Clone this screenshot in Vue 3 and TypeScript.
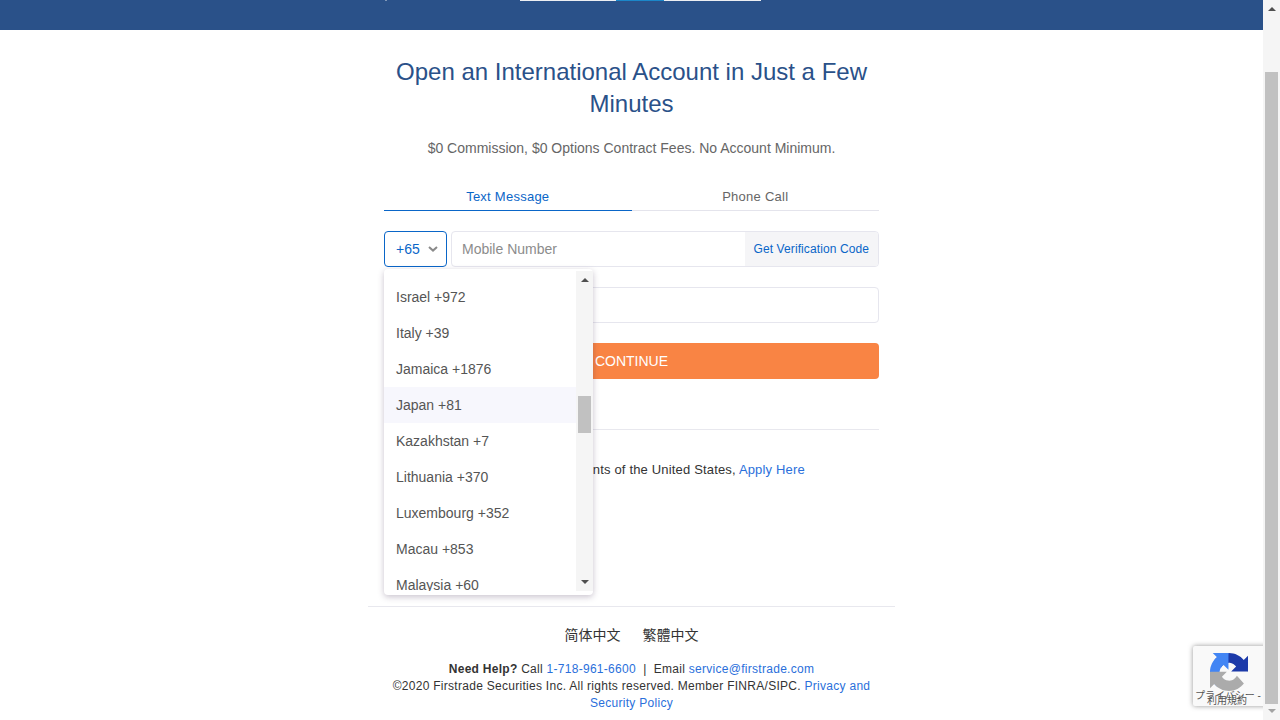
<script setup lang="ts">
const countries: string[] = [
  'Israel +972',
  'Italy +39',
  'Jamaica +1876',
  'Japan +81',
  'Kazakhstan +7',
  'Lithuania +370',
  'Luxembourg +352',
  'Macau +853',
  'Malaysia +60',
]
</script>

<template>
  <div class="page">
    <div class="main">
      <header class="topbar">
        <div class="topbar-line">
          <span class="seg tick"></span>
          <span class="seg white seg-a"></span>
          <span class="seg blue seg-b"></span>
          <span class="seg white seg-c"></span>
        </div>
      </header>

      <section class="content">
        <h1 class="title">Open an International Account in Just a Few Minutes</h1>
        <p class="sub">$0 Commission, $0 Options Contract Fees. No Account Minimum.</p>

        <div class="tabs">
          <div class="tab active">Text Message</div>
          <div class="tab">Phone Call</div>
        </div>

        <div class="phone-row">
          <div class="code-select">
            <span>+65</span>
            <svg class="chev" width="10" height="6" viewBox="0 0 10 6">
              <path d="M1 1l4 3.6L9 1" fill="none" stroke="#8a8a8a" stroke-width="2" />
            </svg>
          </div>
          <div class="phone-input">
            <span class="placeholder">Mobile Number</span>
            <span class="verify">Get Verification Code</span>
          </div>

          <div class="dropdown">
            <ul class="list">
              <li
                v-for="c in countries"
                :key="c"
                class="item"
                :class="{ hover: c === 'Japan +81' }"
              >{{ c }}</li>
            </ul>
            <div class="dd-scroll">
              <span class="tri up dark"></span>
              <span class="dd-thumb"></span>
              <span class="tri down dark"></span>
            </div>
          </div>
        </div>

        <div class="code-input"></div>
        <button class="continue" type="button">CONTINUE</button>
        <div class="rule"></div>
        <p class="note">For citizens and residents of the United States, <a class="link">Apply Here</a></p>
      </section>

      <footer class="footer">
        <div class="langs">
          <span>简体中文</span>
          <span>繁體中文</span>
        </div>
        <p class="legal">
          <b>Need Help?</b> Call <a class="link">1-718-961-6600</a> &nbsp;|&nbsp; Email <a class="link">service@firstrade.com</a><br />
          ©2020 Firstrade Securities Inc. All rights reserved. Member FINRA/SIPC. <a class="link">Privacy and Security Policy</a>
        </p>
      </footer>

      <div class="recaptcha">
        <svg class="rc-logo" width="38" height="38" viewBox="0 0 64 64">
          <path d="M64 31.955l-.033-1.37V4.687l-7.16 7.16C50.95 4.674 42.042.093 32.07.093 21.69.094 12.67 5.01 6.94 12.62l11.735 11.86a15.55 15.55 0 0 1 4.755-5.335c2.05-1.6 4.953-2.91 8.637-2.91.445 0 .79.052 1.043.15 4.565.36 8.522 2.88 10.852 6.54l-8.307 8.307c10.522-.04 22.41-.066 27.845.077" fill="#1c3aa9" />
          <path d="M31.855.002l-1.37.033H4.587l7.16 7.16C4.574 13.05-.007 21.958-.007 31.93c0 10.38 4.916 19.4 12.527 25.13l11.86-11.735a15.55 15.55 0 0 1-5.335-4.755c-1.6-2.05-2.91-4.953-2.91-8.637 0-.445.052-.79.15-1.043.36-4.565 2.88-8.522 6.54-10.852l8.307 8.307c-.04-10.522-.066-22.41.077-27.845" fill="#4285f4" />
          <path d="M.002 31.945l.033 1.37v25.898l7.16-7.16c5.855 7.173 14.763 11.754 24.735 11.754 10.38 0 19.4-4.916 25.13-12.527L45.325 38.42a15.55 15.55 0 0 1-4.755 5.335c-2.05 1.6-4.953 2.91-8.637 2.91-.445 0-.79-.052-1.043-.15-4.565-.36-8.522-2.88-10.852-6.54l8.307-8.307c-10.522.04-22.41.066-27.845-.077" fill="#ababab" />
        </svg>
        <span class="rc-line rc-one">プライバシー - </span>
        <span class="rc-line rc-two">利用規約</span>
      </div>
    </div>

    <aside class="scrollbar">
      <span class="tri up dark"></span>
      <span class="thumb"></span>
      <span class="tri down pale"></span>
    </aside>
  </div>
</template>

<style>
html, body {
  margin: 0;
  height: 100%;
  overflow: hidden;
  background: #fff;
}
</style>

<style scoped>
.page {
  display: flex;
  width: 1280px;
  height: 720px;
  overflow: hidden;
  font-family: "Liberation Sans", Arial, "Noto Sans CJK SC", sans-serif;
  color: #333;
}
.main {
  position: relative;
  flex: 1;
  min-width: 0;
  overflow: hidden;
}
.topbar {
  height: 30px;
  background: #2a5189;
}
.topbar-line {
  display: flex;
  padding-left: 385px;
}
.seg { height: 1px; }
.seg.tick { width: 2px; margin-right: 133px; background: #7f97b8; }
.seg.white { background: #eceef2; }
.seg.blue { background: #1b87c9; }
.seg-a { width: 96px; }
.seg-b { width: 48px; }
.seg-c { width: 97px; }

.content {
  box-sizing: border-box;
  width: 527px;
  height: 577px;
  margin: 0 auto;
  padding: 26px 16px 0;
  border-bottom: 1px solid #e8e8ee;
}
.title {
  margin: 0;
  font-size: 24px;
  line-height: 32px;
  font-weight: 400;
  text-align: center;
  color: #2a5189;
}
.sub {
  margin: 18px 0 0;
  font-size: 14px;
  line-height: 20px;
  text-align: center;
  color: #666;
}
.tabs {
  display: flex;
  margin-top: 26px;
  border-bottom: 1px solid #e4e4ec;
}
.tab {
  flex: 1;
  height: 26px;
  margin-bottom: -1px;
  font-size: 13px;
  line-height: 26px;
  letter-spacing: 0.25px;
  text-align: center;
  color: #666;
}
.tab.active {
  height: 26px;
  color: #0a66c8;
  border-bottom: 1px solid #0a66c8;
}
.phone-row {
  position: relative;
  display: flex;
  gap: 4px;
  margin-top: 20px;
  height: 36px;
}
.code-select {
  box-sizing: border-box;
  display: flex;
  align-items: center;
  justify-content: space-between;
  width: 63px;
  padding: 0 8px 0 11px;
  border: 1px solid #0a66c8;
  border-radius: 4px;
  font-size: 14px;
  color: #0a66c8;
}
.phone-input {
  box-sizing: border-box;
  display: flex;
  flex: 1;
  align-items: stretch;
  justify-content: space-between;
  border: 1px solid #e6e6ee;
  border-radius: 4px;
  overflow: hidden;
}
.placeholder {
  align-self: center;
  padding-left: 10px;
  font-size: 14px;
  color: #8c8c8c;
}
.verify {
  display: flex;
  align-items: center;
  padding: 0 9px 0 9px;
  background: #f5f5f7;
  font-size: 12px;
  letter-spacing: 0.1px;
  color: #0a66c8;
}
.dropdown {
  position: absolute;
  left: 0;
  top: 38px;
  z-index: 3;
  box-sizing: border-box;
  display: flex;
  width: 209px;
  height: 326px;
  padding: 2px 0 4px;
  background: #fff;
  border-radius: 4px;
  box-shadow: 0 2px 6px rgba(60, 40, 80, 0.28);
}
.list {
  flex: 1;
  margin: 0;
  padding: 8px 0 0;
  list-style: none;
  overflow: hidden;
}
.item {
  box-sizing: border-box;
  height: 36px;
  padding-left: 12px;
  font-size: 14px;
  line-height: 36px;
  color: #555;
}
.item.hover { background: #f7f7fd; }
.dd-scroll {
  position: relative;
  flex: none;
  width: 17px;
  background: #f5f5f5;
}
.dd-thumb {
  position: absolute;
  left: 2px;
  top: 125px;
  width: 13px;
  height: 37px;
  background: #c1c1c1;
}
.tri {
  position: absolute;
  left: 50%;
  margin-left: -4px;
  width: 0;
  height: 0;
  border-left: 4px solid transparent;
  border-right: 4px solid transparent;
}
.tri.up { top: 7px; border-bottom: 4px solid #505050; }
.tri.down { bottom: 7px; border-top: 4px solid #505050; }
.tri.pale.down { border-top-color: #a3a3a3; }
.code-input {
  box-sizing: border-box;
  height: 36px;
  margin-top: 20px;
  border: 1px solid #e6e6ee;
  border-radius: 4px;
}
.continue {
  display: block;
  width: 100%;
  height: 36px;
  margin-top: 20px;
  padding: 0;
  border: 0;
  border-radius: 4px;
  background: #f98444;
  color: #fff;
  font-family: inherit;
  font-size: 14px;
}
.rule {
  height: 1px;
  margin-top: 50px;
  background: #e8e8ee;
}
.note {
  margin: 30px 0 0;
  font-size: 13px;
  line-height: 20px;
  letter-spacing: 0.17px;
  text-align: center;
  color: #333;
}
.link { color: #2a6fdb; }
.footer {
  width: 495px;
  margin: 0 auto;
  text-align: center;
}
.langs {
  display: flex;
  justify-content: center;
  gap: 22px;
  margin-top: 18px;
  font-size: 14px;
  line-height: 20px;
  color: #333;
}
.legal {
  margin: 16px 0 0;
  font-size: 12px;
  line-height: 17px;
  letter-spacing: 0.28px;
  color: #333;
}
.recaptcha {
  position: absolute;
  left: 1193px;
  top: 646px;
  width: 256px;
  height: 60px;
  background: #f9f9f9;
  border-radius: 2px;
  box-shadow: 0 0 5px rgba(80, 80, 80, 0.6);
}
.rc-logo {
  position: absolute;
  left: 17px;
  top: 7px;
}
.rc-line {
  position: absolute;
  font-size: 10px;
  line-height: 12px;
  color: #555;
  white-space: nowrap;
}
.rc-one { left: 2px; top: 44px; }
.rc-two { left: 14px; top: 49px; }
.scrollbar {
  position: relative;
  flex: none;
  width: 17px;
  height: 720px;
  background: #f5f5f5;
}
.thumb {
  position: absolute;
  left: 2px;
  top: 72px;
  width: 13px;
  height: 632px;
  background: #c1c1c1;
}
</style>
